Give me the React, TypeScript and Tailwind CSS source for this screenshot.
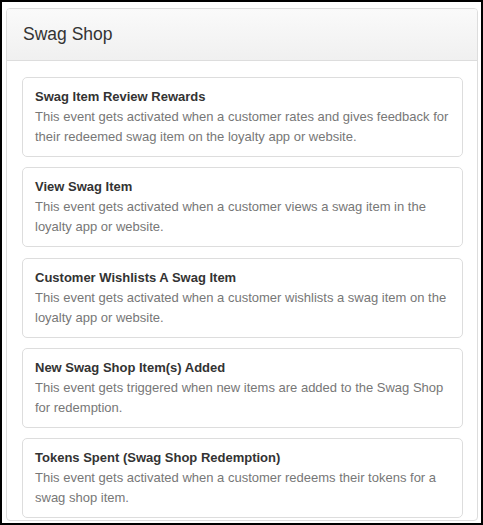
import React from "react";

const items = [
  {
    title: "Swag Item Review Rewards",
    desc: "This event gets activated when a customer rates and gives feedback for their redeemed swag item on the loyalty app or website.",
  },
  {
    title: "View Swag Item",
    desc: "This event gets activated when a customer views a swag item in the loyalty app or website.",
  },
  {
    title: "Customer Wishlists A Swag Item",
    desc: "This event gets activated when a customer wishlists a swag item on the loyalty app or website.",
  },
  {
    title: "New Swag Shop Item(s) Added",
    desc: "This event gets triggered when new items are added to the Swag Shop for redemption.",
  },
  {
    title: "Tokens Spent (Swag Shop Redemption)",
    desc: "This event gets activated when a customer redeems their tokens for a swag shop item.",
  },
];

export default function App() {
  return (
    <div
      className="w-[483px] h-[525px] border-2 border-black bg-white overflow-hidden"
      style={{ fontFamily: '"Liberation Sans", Arial, sans-serif' }}
    >
      <div className="ml-[4px] mr-[3px] mt-[6px] h-[513px] border border-[#dddddd] rounded-[4px] overflow-hidden flex flex-col">
        <div className="h-[52px] shrink-0 border-b border-[#dddddd] bg-gradient-to-b from-[#fafafa] to-[#f0f0f0] flex items-center pl-[16px]">
          <span className="text-[17.5px] text-[#333333]">Swag Shop</span>
        </div>
        <div className="flex-1 pt-[16px] pl-[15px] pr-[14px] flex flex-col gap-[10.25px]">
          {items.map((it) => (
            <div
              key={it.title}
              className="h-[80px] shrink-0 border border-[#dddddd] rounded-[5px] px-[12px] py-[9px]"
            >
              <div className="text-[13px] leading-[20px] font-bold text-[#333333]">{it.title}</div>
              <div className="text-[13px] leading-[20px] text-[#777777]">{it.desc}</div>
            </div>
          ))}
        </div>
      </div>
    </div>
  );
}
